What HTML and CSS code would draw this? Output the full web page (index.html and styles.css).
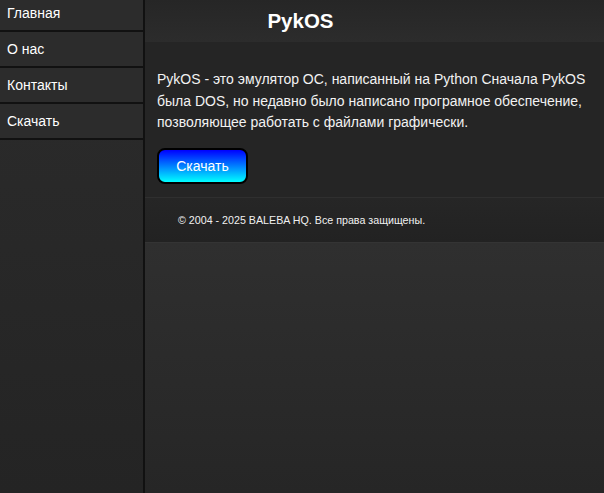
FILE: index.html
```html
<!DOCTYPE html>
<html lang="ru">
<head>
<meta charset="utf-8">
<title>PykOS</title>
<link rel="stylesheet" href="styles.css">
</head>
<body>
<div class="page">
  <aside class="sidebar">
    <nav class="nav">
      <a class="nav-link first" href="#">Главная</a>
      <a class="nav-link" href="#">О нас</a>
      <a class="nav-link" href="#">Контакты</a>
      <a class="nav-link" href="#">Скачать</a>
    </nav>
  </aside>
  <main class="main">
    <header class="header"><h1 class="title">PykOS</h1></header>
    <section class="content">
      <p class="text">PykOS - это эмулятор ОС, написанный на Python Сначала PykOS была DOS, но недавно было написано програмное обеспечение, позволяющее работать с файлами графически.</p>
      <a class="btn" href="#">Скачать</a>
    </section>
    <footer class="footer">© 2004 - 2025 BALEBA HQ. Все права защищены.</footer>
    <div class="rest"></div>
  </main>
</div>
</body>
</html>
```
FILE: styles.css
```css
html, body {
  margin: 0;
  padding: 0;
  height: 100%;
  background: #2a2a2a;
  font-family: "Liberation Sans", Arial, sans-serif;
  color: #fff;
}
.page {
  display: flex;
  height: 493px;
}
.sidebar {
  width: 143px;
  flex: none;
  border-right: 2px solid #111;
  background: linear-gradient(180deg, #2c2c2c 0%, #242424 100%);
}
.nav {
  display: flex;
  flex-direction: column;
  background: #2b2b2b;
  border-bottom: 2px solid #111;
}
.nav-link {
  display: block;
  height: 34px;
  line-height: 34px;
  padding-left: 7px;
  font-size: 14px;
  color: #fff;
  text-decoration: none;
  border-top: 2px solid #111;
  background: #2c2c2c;
}
.nav-link.first {
  border-top: none;
  height: 30px;
  line-height: 27px;
}
.main {
  flex: 1;
  display: flex;
  flex-direction: column;
  background: #262626;
}
.header {
  height: 42px;
  display: flex;
  align-items: center;
  justify-content: center;
  padding-right: 148px;
  background: linear-gradient(180deg, #262626 0%, #2c2c2c 100%);
}
.title {
  margin: 0;
  font-size: 20.5px;
  font-weight: bold;
  color: #fff;
}
.content {
  padding: 27px 12px 13px 12px;
  background: #252525;
}
.text {
  margin: 0 0 14px 0;
  font-size: 14px;
  line-height: 21.5px;
  color: #f2f2f2;
}
.btn {
  display: inline-flex;
  align-items: center;
  justify-content: center;
  width: 87px;
  height: 32px;
  border: 2px solid #000;
  border-radius: 8px;
  background: linear-gradient(180deg, #0000ff 0%, #00ffff 100%);
  color: #fff;
  font-size: 14px;
  text-decoration: none;
}
.footer {
  height: 45px;
  box-sizing: border-box;
  padding: 16px 0 0 33px;
  font-size: 10.7px;
  color: #f0f0f0;
  border-top: 1px solid #2f2f2f;
  background: linear-gradient(180deg, #262626 0%, #222 100%);
}
.rest {
  flex: 1;
  border-top: 1px solid #343434;
  background: linear-gradient(180deg, #2f2f2f 0%, #262626 100%);
}
```
